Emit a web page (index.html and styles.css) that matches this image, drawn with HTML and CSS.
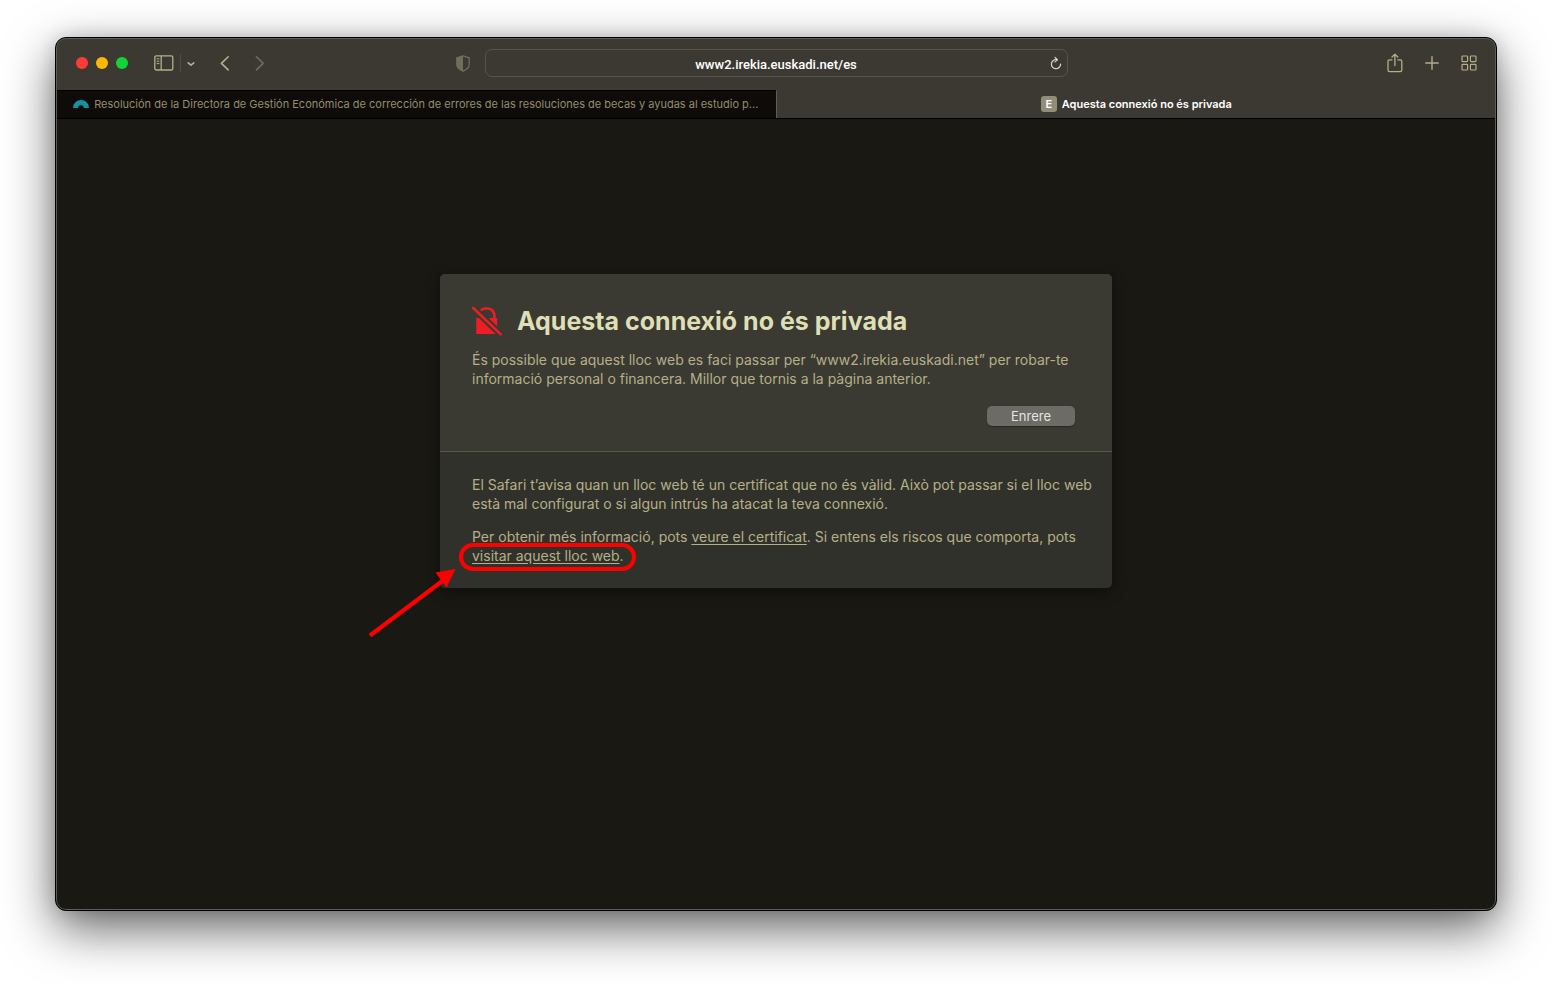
FILE: index.html
```html
<!DOCTYPE html>
<html lang="ca">
<head>
    <meta charset="UTF-8">
    <meta name="viewport" content="width=device-width, initial-scale=1.0">
    <title>Aquesta connexió no és privada</title>
    <link rel="stylesheet" href="styles.css">
</head>
<body>
    <div class="window">
        <header class="toolbar">
            <div class="toolbar-left">
                <div class="lights">
                    <button class="light red" aria-label="Tanca"></button>
                    <button class="light yellow" aria-label="Minimitza"></button>
                    <button class="light green" aria-label="Amplia"></button>
                </div>
                <div class="sidebar-group">
                    <button class="icon-btn" aria-label="Barra lateral">
                        <svg width="20" height="16" viewBox="0 0 20 16" fill="none" stroke="currentColor" stroke-width="1.3">
                            <rect x="0.8" y="0.8" width="18" height="14.2" rx="1.6"/>
                            <path d="M7.2 1v14"/>
                            <path d="M2.6 3.8h2.8M2.6 6.2h2.8M2.6 8.6h2.8" stroke-width="1"/>
                        </svg>
                    </button>
                    <span class="separator"></span>
                    <button class="icon-btn" aria-label="Grups de pestanyes">
                        <svg width="8" height="18" viewBox="0 0 8 18" fill="none" stroke="currentColor" stroke-width="1.6" stroke-linecap="round" stroke-linejoin="round">
                            <path d="M1.2 8.8L4 11.2 6.8 8.8"/>
                        </svg>
                    </button>
                </div>
                <div class="history">
                    <button class="icon-btn" aria-label="Enrere">
                        <svg width="12" height="16" viewBox="0 0 12 16" fill="none" stroke="currentColor" stroke-width="1.6" stroke-linecap="round" stroke-linejoin="round">
                            <path d="M9.2 1.8L2.4 8.4l6.8 6.4"/>
                        </svg>
                    </button>
                    <button class="icon-btn dim" aria-label="Endavant" disabled>
                        <svg width="12" height="16" viewBox="0 0 12 16" fill="none" stroke="currentColor" stroke-width="1.6" stroke-linecap="round" stroke-linejoin="round">
                            <path d="M2.4 1.8L9.2 8.4l-6.8 6.4"/>
                        </svg>
                    </button>
                </div>
                <button class="icon-btn shield" aria-label="Informe de privacitat">
                    <svg width="14" height="17" viewBox="0 0 14 17">
                        <path d="M7 0.8L13.2 2.8V9.4C13.2 12.4 10.4 14.6 7 16.2 3.6 14.6 0.8 12.4 0.8 9.4V2.8Z" fill="none" stroke="currentColor" stroke-width="1.3" stroke-linejoin="round"/>
                        <path d="M7 0.8V16.2C3.6 14.6 0.8 12.4 0.8 9.4V2.8Z" fill="currentColor"/>
                    </svg>
                </button>
            </div>
            <div class="address">
                <input type="text" name="url" aria-label="Adreça" value="www2.irekia.euskadi.net/es">
                <button class="icon-btn reload" aria-label="Torna a carregar">
                    <svg width="12" height="14" viewBox="0 0 12 14" fill="none" stroke="currentColor" stroke-width="1.2" stroke-linecap="round" stroke-linejoin="round">
                        <path d="M6.8 3.6A4.6 4.6 0 1 0 10.6 8.2"/>
                        <path d="M5 1.4l2.4 2.3L5 5.9"/>
                    </svg>
                </button>
            </div>
            <div class="toolbar-right">
                <button class="icon-btn" aria-label="Comparteix">
                    <svg width="16" height="20" viewBox="0 0 16 20" fill="none" stroke="currentColor" stroke-width="1.3" stroke-linecap="round" stroke-linejoin="round">
                        <path d="M5 6.8H2.6Q1 6.8 1 8.4V17Q1 18.6 2.6 18.6H13.2Q14.8 18.6 14.8 17V8.4Q14.8 6.8 13.2 6.8H10.8"/>
                        <path d="M7.9 12.6V1.2M5 4L7.9 1.1 10.8 4"/>
                    </svg>
                </button>
                <button class="icon-btn" aria-label="Pestanya nova">
                    <svg width="14" height="14" viewBox="0 0 14 14" fill="none" stroke="currentColor" stroke-width="1.4" stroke-linecap="round">
                        <path d="M7 0.8v12.4M0.8 7h12.4"/>
                    </svg>
                </button>
                <button class="icon-btn" aria-label="Mostra les pestanyes">
                    <svg width="16" height="16" viewBox="0 0 16 16" fill="none" stroke="currentColor" stroke-width="1.2">
                        <rect x="1" y="1" width="5.6" height="5.6" rx="0.8"/>
                        <rect x="9.4" y="1" width="5.6" height="5.6" rx="0.8"/>
                        <rect x="1" y="9.4" width="5.6" height="5.6" rx="0.8"/>
                        <rect x="9.4" y="9.4" width="5.6" height="5.6" rx="0.8"/>
                    </svg>
                </button>
            </div>
        </header>

        <nav class="tabs">
            <a class="tab" href="#">
                <svg width="16" height="8" viewBox="0 0 16 8">
                    <path d="M0 8A8 8 0 0 1 16 8H10.8A2.8 2.8 0 0 0 5.2 8Z" fill="#1691a1"/>
                </svg>
                <span class="tab-title">Resolución de la Directora de Gestión Económica de corrección de errores de las resoluciones de becas y ayudas al estudio p...</span>
            </a>
            <a class="tab active" href="#">
                <span class="favicon">E</span>
                <span class="tab-title">Aquesta connexió no és privada</span>
            </a>
        </nav>

        <main class="page">
            <div class="card">
                <section class="warning">
                    <div class="heading">
                        <svg width="30" height="30" viewBox="0 0 30 30">
                            <path d="M4.2 12H25.2V28H4.2Z" fill="#ee1c25"/>
                            <path d="M8.4 4.6Q11 2.2 14.6 2.2Q22.4 2.6 22.4 10.4V13" fill="none" stroke="#ee1c25" stroke-width="2.6"/>
                            <path d="M1.2 2L30 29.4" stroke="#3a3932" stroke-width="6.6"/>
                            <path d="M1.2 2L28.8 28.4" stroke="#ee1c25" stroke-width="2.6" stroke-linecap="round"/>
                        </svg>
                        <h1>Aquesta connexió no és privada</h1>
                    </div>
                    <p>És possible que aquest lloc web es faci passar per “www2.irekia.euskadi.net” per robar-te informació personal o financera. Millor que tornis a la pàgina anterior.</p>
                    <div class="actions">
                        <button class="back-btn">Enrere</button>
                    </div>
                </section>
                <section class="details">
                    <p>El Safari t’avisa quan un lloc web té un certificat que no és vàlid. Això pot passar si el lloc web està mal configurat o si algun intrús ha atacat la teva connexió.</p>
                    <p>Per obtenir més informació, pots <a href="#">veure el certificat</a>. Si entens els riscos que comporta, pots <span class="marked"><a href="#">visitar aquest lloc web</a>.
                        <svg class="arrow" width="90" height="70" viewBox="0 0 90 70">
                            <path d="M2 67.5L75 12.5" stroke="#ff0000" stroke-width="4.2"/>
                            <path d="M87.5 1L67.5 4.6 78.5 19.4Z" fill="#ff0000"/>
                        </svg></span></p>
                </section>
            </div>
        </main>
    </div>
</body>
</html>
```

FILE: styles.css
```css
* {
    box-sizing: border-box;
}
body {
    margin: 0;
    min-height: 100vh;
    padding: 37px 55px 73px;
    display: flex;
    background-color: #fff;
    font-family: Inter, "Liberation Sans", sans-serif;
    color: #b5b087;
}
button {
    padding: 0;
    border: none;
    background: none;
    color: inherit;
    font-family: inherit;
}
.window {
    flex: 1;
    min-width: 0;
    display: flex;
    flex-direction: column;
    overflow: hidden;
    border: 1px solid #000;
    border-radius: 11px;
    background-color: #191813;
    box-shadow: 0 18px 50px rgba(0, 0, 0, 0.6), 0 0 18px rgba(0, 0, 0, 0.15);
    position: relative;
}
/* thin light line inside the window edge */
.window::after {
    content: "";
    position: absolute;
    inset: 0;
    border: 1px solid #5d5c58;
    border-radius: 10px;
    pointer-events: none;
}

/* Toolbar */
.toolbar {
    display: grid;
    grid-template-columns: 1fr minmax(0, 583px) 1fr;
    align-items: center;
    height: 52px;
    padding-bottom: 2px;
    background-color: #3b3932;
}
.toolbar-left {
    display: flex;
    align-items: center;
    padding: 0 15px 0 20px;
}
.lights {
    display: flex;
    gap: 8px;
    margin-right: 26px;
}
.light {
    width: 12px;
    height: 12px;
    border-radius: 50%;
}
.red {
    background-color: #ff3b37;
}
.yellow {
    background-color: #ffb700;
}
.green {
    background-color: #14d338;
}
.icon-btn {
    display: flex;
}
.icon-btn.dim {
    color: #6f6c57;
}
.icon-btn.shield {
    margin-left: auto;
    color: #706d5a;
}
.sidebar-group {
    display: flex;
    align-items: center;
    gap: 6px;
    margin-right: 24px;
}
.separator {
    width: 1px;
    height: 18px;
    background-color: #504e46;
}
.history {
    display: flex;
    gap: 23px;
}
.address {
    display: flex;
    align-items: center;
    height: 28px;
    padding: 0 5px 0 17px;
    border: 1px solid #56544d;
    border-radius: 7px;
}
.address input {
    flex: 1;
    min-width: 0;
    padding: 2px 0 0;
    border: none;
    outline: none;
    background: none;
    color: #fff;
    font-family: Roboto, "Liberation Sans", sans-serif;
    font-size: 13px;
    font-weight: 500;
    text-align: center;
}
.reload {
    color: #d9d7cf;
}
.toolbar-right {
    display: flex;
    align-items: center;
    justify-content: flex-end;
    gap: 22px;
    padding-right: 19px;
}

/* Tabs */
.tabs {
    display: flex;
    height: 29px;
    border-bottom: 1px solid #000;
    background-color: #3b3932;
}
.tab {
    flex: 1;
    min-width: 0;
    display: flex;
    align-items: center;
    justify-content: center;
    gap: 5px;
    padding: 0 12px 1px;
    border-top: 1px solid #000;
    background-color: #0f0b08;
    color: #918d6f;
    font-size: 11px;
    text-decoration: none;
}
.tab.active {
    border-top-color: #3b3932;
    border-left: 1px solid #5d5c58;
    background-color: #3b3932;
    color: #fff;
    font-weight: 600;
}
.tab svg {
    flex: none;
}
.tab-title {
    overflow: hidden;
    white-space: nowrap;
    text-overflow: ellipsis;
}
.favicon {
    width: 16px;
    height: 16px;
    border-radius: 3px;
    background-color: #918d78;
    line-height: 16px;
    text-align: center;
}

/* Warning page */
.page {
    flex: 1;
    padding: 155px 20px 20px;
}
.card {
    max-width: 672px;
    margin: 0 auto;
    border-radius: 5px;
    background-color: #31312b;
    box-shadow: 0 4px 14px rgba(0, 0, 0, 0.45);
    font-size: 14px;
    line-height: 19px;
}
.card p {
    margin: 0;
}
.warning {
    padding: 32px 32px 25px;
    border-bottom: 1px solid #585743;
    border-radius: 5px 5px 0 0;
    background-color: #3a3932;
}
.heading {
    display: flex;
    align-items: center;
    gap: 15px;
    margin-bottom: 14px;
}
h1 {
    margin: 0;
    color: #dfdfb5;
    font-size: 25px;
    line-height: 30px;
    font-weight: 700;
}
.actions {
    display: flex;
    justify-content: flex-end;
    padding: 18px 5px 0 0;
}
.back-btn {
    width: 88px;
    height: 20px;
    border-radius: 5px;
    background-color: #6c6b65;
    box-shadow: 0 1px 1px rgba(0, 0, 0, 0.3);
    color: #e6e5e1;
    font-size: 13px;
}
.details {
    padding: 23px 16px 23px 32px;
}
.details p + p {
    margin-top: 14px;
}
.details a {
    color: inherit;
    text-underline-offset: 2px;
}

/* Red outline and arrow over the link */
.marked {
    display: inline-block;
    position: relative;
}
.marked::before {
    content: "";
    position: absolute;
    inset: -3px -12px -6px -13px;
    border: 4px solid #ff0000;
    border-radius: 14px;
}
.marked a {
    position: relative;
}
.arrow {
    position: absolute;
    right: calc(100% + 14px);
    top: 22px;
}
```
